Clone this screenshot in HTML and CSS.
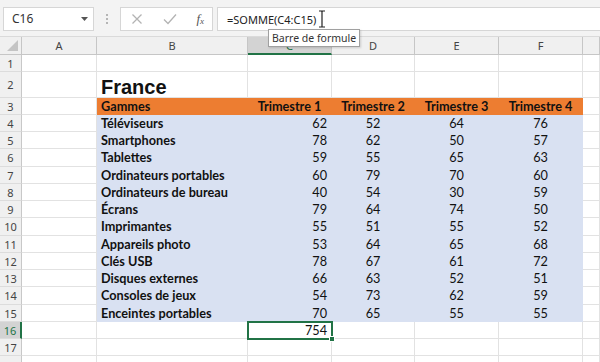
FILE: index.html
```html
<!DOCTYPE html>
<html lang="fr">
<head>
    <meta charset="UTF-8">
    <title>Classeur - Excel</title>
    <link rel="stylesheet" href="styles.css">
</head>
<body>
    <div class="app">
        <div class="formula-bar">
            <div class="name-box">
                <span>C16</span>
                <svg class="caret" width="7" height="4" viewBox="0 0 7 4"><path d="M0 0h7L3.5 4z" fill="#555"/></svg>
            </div>
            <div class="grip">
                <i></i><i></i><i></i>
            </div>
            <div class="fx-buttons">
                <svg width="12" height="12" viewBox="0 0 12 12"><path d="M1.5 1.5l9 9M10.5 1.5l-9 9" stroke="#b3b3b3" stroke-width="1.3" fill="none"/></svg>
                <svg width="14" height="12" viewBox="0 0 14 12"><path d="M1 6.5l4 4L13 1.5" stroke="#b3b3b3" stroke-width="1.3" fill="none"/></svg>
                <span class="fx">f<sub>x</sub></span>
            </div>
            <div class="formula-input">=SOMME(C4:C15)</div>
        </div>

        <div class="grid-wrap">
            <table class="sheet">
                <colgroup>
                    <col class="w-rh"><col class="w-a"><col class="w-b"><col class="w-c">
                    <col class="w-d"><col class="w-e"><col class="w-f"><col class="w-g">
                </colgroup>
                <thead>
                    <tr class="col-heads">
                        <th class="corner"><span class="tri"></span></th>
                        <th>A</th><th>B</th><th class="sel">C</th><th>D</th><th>E</th><th>F</th><th></th>
                    </tr>
                </thead>
                <tbody>
                    <tr class="h17"><th>1</th><td></td><td></td><td></td><td></td><td></td><td></td><td></td></tr>
                    <tr class="h26"><th>2</th><td></td><td class="title">France</td><td></td><td></td><td></td><td></td><td></td></tr>
                    <tr class="h17 head-row"><th>3</th><td></td>
                        <td class="or label">Gammes</td><td class="or">Trimestre 1</td><td class="or">Trimestre 2</td><td class="or">Trimestre 3</td><td class="or">Trimestre 4</td><td></td></tr>
                    <tr class="h17"><th>4</th><td></td><td class="bl label">Téléviseurs</td><td class="bl num">62</td><td class="bl mid">52</td><td class="bl mid">64</td><td class="bl mid">76</td><td></td></tr>
                    <tr class="h17"><th>5</th><td></td><td class="bl label">Smartphones</td><td class="bl num">78</td><td class="bl mid">62</td><td class="bl mid">50</td><td class="bl mid">57</td><td></td></tr>
                    <tr class="h18"><th>6</th><td></td><td class="bl label">Tablettes</td><td class="bl num">59</td><td class="bl mid">55</td><td class="bl mid">65</td><td class="bl mid">63</td><td></td></tr>
                    <tr class="h17"><th>7</th><td></td><td class="bl label">Ordinateurs portables</td><td class="bl num">60</td><td class="bl mid">79</td><td class="bl mid">70</td><td class="bl mid">60</td><td></td></tr>
                    <tr class="h17"><th>8</th><td></td><td class="bl label">Ordinateurs de bureau</td><td class="bl num">40</td><td class="bl mid">54</td><td class="bl mid">30</td><td class="bl mid">59</td><td></td></tr>
                    <tr class="h17"><th>9</th><td></td><td class="bl label">Écrans</td><td class="bl num">79</td><td class="bl mid">64</td><td class="bl mid">74</td><td class="bl mid">50</td><td></td></tr>
                    <tr class="h18"><th>10</th><td></td><td class="bl label">Imprimantes</td><td class="bl num">55</td><td class="bl mid">51</td><td class="bl mid">55</td><td class="bl mid">52</td><td></td></tr>
                    <tr class="h17"><th>11</th><td></td><td class="bl label">Appareils photo</td><td class="bl num">53</td><td class="bl mid">64</td><td class="bl mid">65</td><td class="bl mid">68</td><td></td></tr>
                    <tr class="h17"><th>12</th><td></td><td class="bl label">Clés USB</td><td class="bl num">78</td><td class="bl mid">67</td><td class="bl mid">61</td><td class="bl mid">72</td><td></td></tr>
                    <tr class="h17"><th>13</th><td></td><td class="bl label">Disques externes</td><td class="bl num">66</td><td class="bl mid">63</td><td class="bl mid">52</td><td class="bl mid">51</td><td></td></tr>
                    <tr class="h18"><th>14</th><td></td><td class="bl label">Consoles de jeux</td><td class="bl num">54</td><td class="bl mid">73</td><td class="bl mid">62</td><td class="bl mid">59</td><td></td></tr>
                    <tr class="h17"><th>15</th><td></td><td class="bl label">Enceintes portables</td><td class="bl num">70</td><td class="bl mid">65</td><td class="bl mid">55</td><td class="bl mid">55</td><td></td></tr>
                    <tr class="h17"><th class="sel-row">16</th><td></td><td></td><td class="num active">754<span class="handle"></span></td><td></td><td></td><td></td><td></td></tr>
                    <tr class="h17"><th>17</th><td></td><td></td><td></td><td></td><td></td><td></td><td></td></tr>
                    <tr class="h17"><th></th><td></td><td></td><td></td><td></td><td></td><td></td><td></td></tr>
                </tbody>
            </table>

            <div class="tooltip">Barre de formule</div>
        </div>

        <svg class="ibeam" width="8" height="18" viewBox="0 0 8 18">
            <path d="M1 1h2.5l.5.6.5-.6H7M4 1.6v14.8M1 17h2.5l.5-.6.5.6H7" stroke="#222" stroke-width="1.2" fill="none"/>
        </svg>
    </div>
</body>
</html>
```

FILE: styles.css
```css
* {
    box-sizing: border-box;
}

body {
    margin: 0;
    background: #fff;
    font-family: "Lato", "Liberation Sans", sans-serif;
    overflow: hidden;
}

.app {
    position: relative;
    width: 600px;
    height: 362px;
    overflow: hidden;
}

/* formula bar */
.formula-bar {
    display: flex;
    align-items: center;
    height: 37px;
    padding: 7px 0 6px 3px;
    background: #f3f3f3;
    border-bottom: 1px solid #dadada;
}

.name-box {
    display: flex;
    align-items: center;
    justify-content: space-between;
    width: 91px;
    height: 24px;
    padding: 0 5px 0 8px;
    background: #fff;
    border: 1px solid #d6d6d6;
    font-family: "Noto Sans", sans-serif;
    font-size: 12px;
    color: #333;
}

.grip {
    display: flex;
    flex-direction: column;
    gap: 2px;
    width: 26px;
    align-items: center;
}

.grip i {
    width: 2px;
    height: 2px;
    background: #b5b5b5;
}

.fx-buttons {
    display: flex;
    align-items: center;
    justify-content: space-between;
    width: 93px;
    height: 24px;
    padding: 0 8px 0 10px;
    background: #fff;
    border: 1px solid #d6d6d6;
}

.fx {
    font-family: "Liberation Serif", serif;
    font-style: italic;
    font-size: 13px;
    color: #555;
}

.fx sub {
    font-size: 9px;
    vertical-align: -1px;
}

.formula-input {
    flex: 1;
    height: 24px;
    margin-left: 4px;
    padding: 4px 0 0 9px;
    background: #fff;
    border: 1px solid #d6d6d6;
    border-right: none;
    font-family: "Noto Sans", sans-serif;
    font-size: 11px;
    color: #222;
}

/* grid */
.grid-wrap {
    position: relative;
}

.sheet {
    table-layout: fixed;
    border-collapse: separate;
    border-spacing: 0;
    width: 600px;
    font-size: 12.7px;
    color: #111;
}

.w-rh { width: 22px; }
.w-a { width: 75px; }
.w-b { width: 151px; }
.w-c { width: 84px; }
.w-d { width: 83px; }
.w-e { width: 84px; }
.w-f { width: 84px; }
.w-g { width: 17px; }

.sheet td {
    padding: 0 4px;
    border-right: 1px solid #e2e2e2;
    border-bottom: 1px solid #e2e2e2;
    white-space: nowrap;
    overflow: visible;
    line-height: 1;
}

.sheet th {
    padding: 0;
    font-family: "Noto Sans", sans-serif;
    font-weight: normal;
    font-size: 11px;
    color: #444;
    background: #f0f0f0;
    border-right: 1px solid #c8c8c8;
    border-bottom: 1px solid #dcdcdc;
}

.col-heads {
    height: 18px;
}

.col-heads th {
    border-bottom: 1px solid #c6c6c6;
    border-right: 1px solid #c6c6c6;
}

.col-heads th.sel {
    background: #d3d3d3;
    color: #217346;
    border-bottom: 2px solid #217346;
}

.corner {
    position: relative;
}

.tri {
    position: absolute;
    right: 3px;
    bottom: 3px;
    width: 0;
    height: 0;
    border-left: 11px solid transparent;
    border-bottom: 11px solid #c4c4c4;
}

.sheet tbody th {
    text-align: center;
}

.sheet tbody th.sel-row {
    background: #d3d3d3;
    color: #217346;
    border-right: 2px solid #217346;
}

.h17 { height: 17px; }
.h18 { height: 18px; }
.h26 { height: 26px; }

.title {
    font-family: "Liberation Sans", sans-serif;
    font-weight: bold;
    font-size: 20px;
    padding-top: 4px;
    vertical-align: bottom;
}

.or {
    background: #ed7d31;
    border-color: #ed7d31 !important;
    font-weight: bold;
    text-align: center;
}

.bl {
    background: #d9e1f2;
    border-color: #d9e1f2 !important;
}

.label {
    font-weight: bold;
    text-align: left;
}

.num {
    text-align: right;
}

.mid {
    text-align: center;
}

.active {
    position: relative;
    outline: 2px solid #217346;
    outline-offset: -1px;
}

.handle {
    position: absolute;
    right: -4px;
    bottom: -4px;
    width: 6px;
    height: 6px;
    background: #217346;
    border: 1px solid #fff;
}

.tooltip {
    position: absolute;
    left: 268px;
    top: -8px;
    padding: 1px 3px;
    background: #fff;
    border: 1px solid #a0a0a0;
    font-family: "Noto Sans", sans-serif;
    font-size: 10.5px;
    color: #333;
    box-shadow: 1px 1px 2px rgba(0, 0, 0, 0.15);
}

.ibeam {
    position: absolute;
    left: 318px;
    top: 10px;
}
```
